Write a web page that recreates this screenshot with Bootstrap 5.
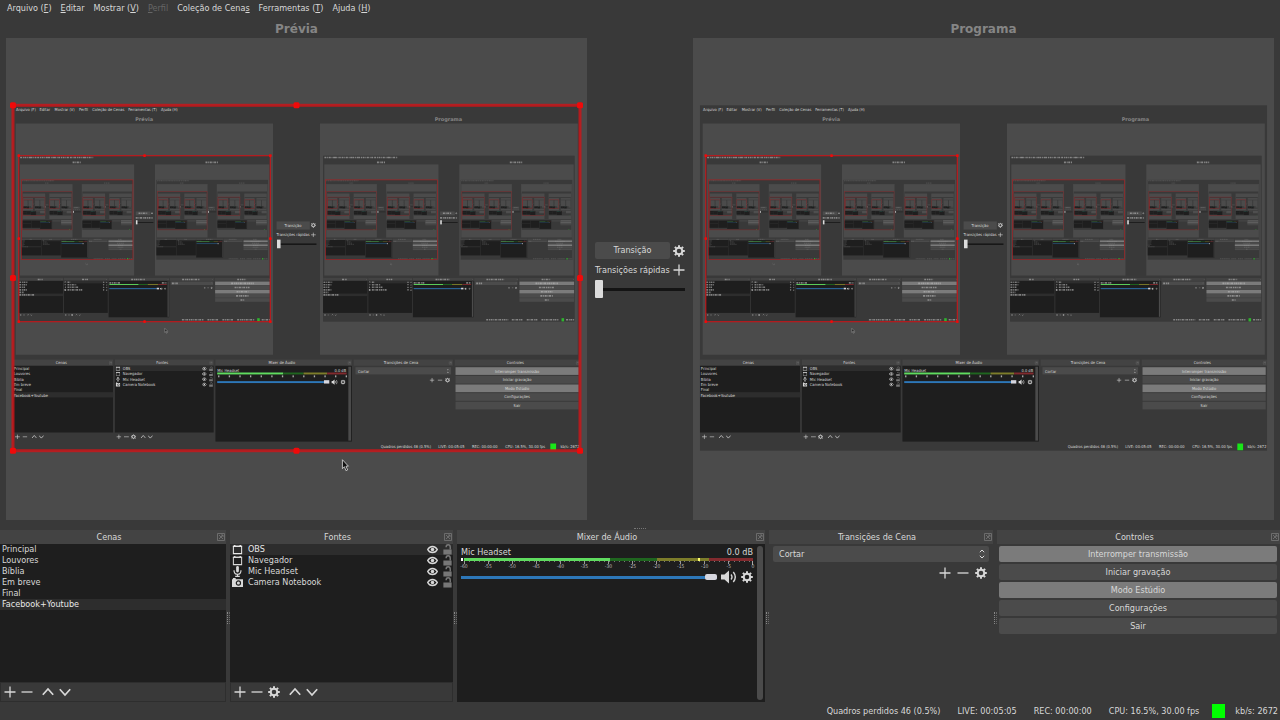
<!DOCTYPE html>
<html lang="pt-BR" data-bs-theme="dark">
<head>
<meta charset="utf-8">
<meta name="viewport" content="width=device-width, initial-scale=1">
<title>OBS Studio</title>
<link href="https://cdn.jsdelivr.net/npm/bootstrap@5.3.0/dist/css/bootstrap.min.css" rel="stylesheet">
<style>
:root{--win:#393939;--pane:#4b4b4b;--well:#1e1e1e;--head:#434343;--ink:#d8d8d8}
body{background:var(--win);color:var(--ink);font-family:"DejaVu Sans Condensed","DejaVu Sans",sans-serif;font-size:9px;line-height:11px}
button,select,input{font:inherit}
.app{min-height:100vh}
.menubar{height:16px;padding-left:7px;gap:9px}
.menubar .nav-link{padding:0;color:var(--ink)}
.menubar .nav-link.disabled{color:#666}
.studio{padding:0 6px}
.monitor{flex:1 1 0;min-width:0}
.monitor h2{font:bold 12px/16px "DejaVu Sans",sans-serif;color:#858585;margin:5px 0 1px;text-align:center}
.canvas-pane{background:var(--pane);flex:1 1 0;min-height:0}
.canvas-pane > svg{display:block;width:100%;height:100%}
.swap{width:106px;padding:4px 8px 0;align-self:center}
.quick{margin:5px 0 4px}
.trans-btn{width:75px}
.grow{flex:1 1 auto}
.ic{display:block;width:12px;height:12px;fill:none;stroke:currentColor;stroke-width:1.3}
.ic.spk{width:16px;height:14px}
.tool{background:none;border:0;padding:0;color:var(--ink);display:block}
.dark-btn{background:var(--pane);border:0;border-radius:2px;color:var(--ink);padding:3px 0;line-height:11px;text-align:center}
.dark-btn:hover{background:#5a5a5a;color:#fff}
.dark-btn.active{background:#7b7b7b}
.tbar{appearance:none;display:block;width:90px;height:18px;margin:0;background:linear-gradient(#141414,#141414) center/100% 3px no-repeat}
.tbar::-webkit-slider-thumb{appearance:none;width:8px;height:18px;background:#dcdcdc;border-radius:1px}
.split{height:10px}
.split i{width:12px;height:2px;border-top:1px dotted #777}
.docks{display:grid;grid-template-columns:226fr 223fr 308fr 224fr 283fr;gap:4px;height:172px}
.dock{min-width:0;position:relative}
.dock header{background:var(--head);height:14px;line-height:14px;text-align:center;padding:0 14px 0 6px;position:relative}
.dock header svg{position:absolute;right:1px;top:3px;width:8px;height:8px;color:#777}
.dock .grip{position:absolute;right:-4px;top:82px;width:3px;height:12px;border-left:1px dotted #888;border-right:1px dotted #666}
.well{background:var(--well)}
.rows{border-radius:0}
.rows .list-group-item{background:transparent;border:0;padding:0 2px;line-height:11px;color:var(--ink);text-align:left}
.rows .list-group-item.active{background:#2d2d2d;color:#e8e8e8;margin:0}
.rows .src{height:11px;padding-right:0}
.src .ic{width:11px;height:11px}
.src .nm{padding-left:5px}
.lock{color:#777}
.toolbar{height:20px;padding:0 3px;gap:5px;background:var(--win);border:1px solid #2e2e2e}
.toolbar .up{margin-left:4px}
.mixer{padding:3px 0 0 4px;margin-right:4px}
.scrollbar{width:6px;border-radius:3px;background:#4b4b4b;margin:2px 2px 2px 0}
.meter{height:3px}
.ticks{height:4px;margin-left:3px;border-right:1px solid #aaa;background:repeating-linear-gradient(90deg,#999 0 1px,transparent 1px 24px) 0 0/100% 3px no-repeat,repeating-linear-gradient(90deg,#777 0 1px,transparent 1px 5px) 0 0/100% 1px no-repeat}
.scale{margin:-1px 0 0 3px;font-size:5px;line-height:5px;color:#bbb}
.scale span{width:0;display:flex;justify-content:center}
.vol-row{height:14px;margin-top:1px;gap:4px}
.fader{appearance:none;height:6px;margin:0;min-width:0;flex:1 1 0;background:linear-gradient(#2d77b8,#2d77b8) center/100% 3px no-repeat}
.fader::-webkit-slider-thumb{appearance:none;width:12px;height:6px;border-radius:2px;background:#d6d6de}
.trans{padding:2px 4px}
.combo{appearance:none;background:var(--pane);border:0;border-radius:2px;color:var(--ink);height:16px;width:100%;padding:0 6px}
.combo-box .ic{position:absolute;right:1px;top:2px;pointer-events:none}
.trans-tools{gap:6px;margin:5px 2px 0}
.ctl{padding:2px 3px 0 2px;gap:2px}
.ctl .dark-btn{height:16px}
.status{height:18px;gap:17px;padding-right:2px;line-height:18px}
.led{width:13px;height:14px;background:#00ff00;margin:0 -7px 0 -4px}
svg text{font-size:4px;fill:#d8d8d8;font-family:"DejaVu Sans Condensed","DejaVu Sans",sans-serif}
svg text.cap{font:bold 5px "DejaVu Sans",sans-serif;fill:#858585}
</style>
</head>
<body>
<svg class="d-none" aria-hidden="true">
  <symbol id="i-plus" viewBox="0 0 12 12"><path d="M6 .5v11M.5 6h11"/></symbol>
  <symbol id="i-minus" viewBox="0 0 12 12"><path d="M.5 6h11"/></symbol>
  <symbol id="i-up" viewBox="0 0 12 12"><path d="M.8 8.800 6 3l5.200 5.800" stroke-width="1.700"/></symbol>
  <symbol id="i-down" viewBox="0 0 12 12"><path d="M.8 3.200 6 9l5.200-5.800" stroke-width="1.700"/></symbol>
  <symbol id="i-gear" viewBox="0 0 12 12"><circle cx="6" cy="6" r="3.300" stroke-width="2"/><path d="M6 .2v2M6 9.800v2M.2 6h2M9.800 6h2M1.900 1.900l1.400 1.400M8.700 8.700l1.400 1.400M1.900 10.100l1.400-1.400M8.700 3.300l1.400-1.400" stroke-width="2"/></symbol>
  <symbol id="i-win" viewBox="0 0 12 12"><path d="M1.500 2.500h9v8h-9z" stroke-width="1.100"/><path d="M1 2.600h10M3 1v2M9 1v2" stroke-width="1.600"/></symbol>
  <symbol id="i-mic" viewBox="0 0 12 12"><rect x="4.500" y="0" width="3" height="7" rx="1.500" fill="currentColor" stroke="none"/><path d="M2.200 4.500c0 6 7.600 6 7.600 0M6 9v2M3.500 11.300h5"/></symbol>
  <symbol id="i-cam" viewBox="0 0 12 12"><path d="M0 2.500h1V1h3v1.500h8V11H0z" fill="currentColor" stroke="none"/><circle cx="7" cy="6.600" r="2.300" stroke="#1e1e1e"/></symbol>
  <symbol id="i-eye" viewBox="0 0 12 12"><path d="M.8 6C3 1.500 9 1.500 11.200 6 9 10.500 3 10.500.8 6z" stroke-width="1.600"/><circle cx="6" cy="6" r="1.900" fill="currentColor" stroke="none"/></symbol>
  <symbol id="i-lock" viewBox="0 0 12 12"><path d="M1.500 6h9v5.500h-9z" fill="currentColor" stroke="none"/><path d="M4.500 3.500c0-3.500 4.500-3.500 4.500 0V6" stroke-width="1.600"/></symbol>
  <symbol id="i-spk" viewBox="0 0 16 14"><path d="M0 4.500h3.500L8 .5v13l-4.500-4H0z" fill="currentColor" stroke="none"/><path d="M10 4.500q2 2.500 0 5M12.300 2q4 5 0 10" stroke-width="1.400"/></symbol>
  <symbol id="i-pop" viewBox="0 0 8 8"><path d="M.5 .5h7v7h-7zM2 2l4 4M6 2 2 6M4 2h2v2" stroke-width=".8"/></symbol>
  <symbol id="i-sort" viewBox="0 0 12 12"><path d="M3.800 4.200 6 2l2.200 2.200M3.800 7.800 6 10l2.200-2.200" stroke-width="1"/></symbol>
</svg>

<div class="app d-flex flex-column">
  <nav class="nav menubar align-items-center" aria-label="Menu">
    <a class="nav-link" href="#">Arquivo (<u>F</u>)</a>
    <a class="nav-link" href="#"><u>E</u>ditar</a>
    <a class="nav-link" href="#">Mostrar (<u>V</u>)</a>
    <a class="nav-link disabled" href="#" aria-disabled="true"><u>P</u>erfil</a>
    <a class="nav-link" href="#">Coleção de Cena<u>s</u></a>
    <a class="nav-link" href="#">Ferramentas (<u>T</u>)</a>
    <a class="nav-link" href="#">Ajuda (<u>H</u>)</a>
  </nav>

  <main class="studio d-flex grow">
    <section class="monitor d-flex flex-column"><h2>Prévia</h2><div class="canvas-pane"><svg id="preview" viewBox="0 0 582 482" role="img" aria-label="Prévia"></svg></div></section>
    <section class="swap">
      <div class="d-flex align-items-center justify-content-between"><button class="dark-btn trans-btn" type="button">Transição</button><button class="tool" type="button" aria-label="Configurar transição"><svg class="ic"><use href="#i-gear"/></svg></button></div>
      <div class="quick d-flex align-items-center justify-content-between"><label for="tbar" class="text-nowrap">Transições rápidas</label><button class="tool" type="button" aria-label="Adicionar transição rápida"><svg class="ic"><use href="#i-plus"/></svg></button></div>
      <input class="tbar" id="tbar" type="range" min="0" max="100" value="0">
    </section>
    <section class="monitor d-flex flex-column"><h2>Programa</h2><div class="canvas-pane"><svg id="program" viewBox="0 0 582 482" role="img" aria-label="Programa"></svg></div></section>
  </main>

  <div class="split d-flex justify-content-center align-items-end"><i></i></div>

  <div class="docks">
    <section class="dock d-flex flex-column">
      <header>Cenas<svg class="ic"><use href="#i-pop"/></svg></header>
      <div class="well grow list-group rows">
        <button type="button" class="list-group-item">Principal</button>
        <button type="button" class="list-group-item">Louvores</button>
        <button type="button" class="list-group-item">Bíblia</button>
        <button type="button" class="list-group-item">Em breve</button>
        <button type="button" class="list-group-item">Final</button>
        <button type="button" class="list-group-item active">Facebook+Youtube</button>
      </div>
      <div class="toolbar d-flex align-items-center">
        <button class="tool" type="button" aria-label="Adicionar cena"><svg class="ic"><use href="#i-plus"/></svg></button>
        <button class="tool" type="button" aria-label="Remover cena"><svg class="ic"><use href="#i-minus"/></svg></button>
        <button class="tool up" type="button" aria-label="Mover cena para cima"><svg class="ic"><use href="#i-up"/></svg></button>
        <button class="tool" type="button" aria-label="Mover cena para baixo"><svg class="ic"><use href="#i-down"/></svg></button>
      </div>
      <span class="grip"></span>
    </section>

    <section class="dock d-flex flex-column">
      <header>Fontes<svg class="ic"><use href="#i-pop"/></svg></header>
      <ul class="well grow list-group rows mb-0" id="sources"></ul>
      <div class="toolbar d-flex align-items-center">
        <button class="tool" type="button" aria-label="Adicionar fonte"><svg class="ic"><use href="#i-plus"/></svg></button>
        <button class="tool" type="button" aria-label="Remover fonte"><svg class="ic"><use href="#i-minus"/></svg></button>
        <button class="tool" type="button" aria-label="Propriedades da fonte"><svg class="ic"><use href="#i-gear"/></svg></button>
        <button class="tool up" type="button" aria-label="Mover fonte para cima"><svg class="ic"><use href="#i-up"/></svg></button>
        <button class="tool" type="button" aria-label="Mover fonte para baixo"><svg class="ic"><use href="#i-down"/></svg></button>
      </div>
      <span class="grip"></span>
    </section>

    <section class="dock d-flex flex-column">
      <header>Mixer de Áudio<svg class="ic"><use href="#i-pop"/></svg></header>
      <div class="well grow d-flex">
        <div class="mixer grow">
          <div class="d-flex justify-content-between"><label for="vol">Mic Headset</label><span>0.0 dB</span></div>
          <div class="meter d-flex">
            <b style="width:1%;background:linear-gradient(90deg,#fff 2px,#1e1e1e 2px)"></b><b style="width:50%;background:#5fdc5f"></b><b style="width:16%;background:#1f661f"></b><b style="width:14%;background:#7d7d2a"></b><b style="width:1%;background:#ffff70"></b><b style="width:3%;background:#7d7d2a"></b><b style="width:15%;background:#822a2e"></b>
          </div>
          <div class="ticks"></div>
          <div class="scale d-flex justify-content-between" id="scale"></div>
          <div class="vol-row d-flex align-items-center">
            <input class="fader" id="vol" type="range" min="0" max="100" value="100">
            <button class="tool" type="button" aria-label="Silenciar"><svg class="ic spk"><use href="#i-spk"/></svg></button>
            <button class="tool" type="button" aria-label="Configurar áudio"><svg class="ic"><use href="#i-gear"/></svg></button>
          </div>
        </div>
        <div class="scrollbar"></div>
      </div>
      <span class="grip"></span>
    </section>

    <section class="dock d-flex flex-column">
      <header>Transições de Cena<svg class="ic"><use href="#i-pop"/></svg></header>
      <div class="trans">
        <div class="combo-box position-relative"><select class="combo" aria-label="Transição de cena"><option>Cortar</option><option>Esmaecer</option></select><svg class="ic"><use href="#i-sort"/></svg></div>
        <div class="trans-tools d-flex justify-content-end">
          <button class="tool" type="button" aria-label="Adicionar transição"><svg class="ic"><use href="#i-plus"/></svg></button>
          <button class="tool" type="button" aria-label="Remover transição"><svg class="ic"><use href="#i-minus"/></svg></button>
          <button class="tool" type="button" aria-label="Propriedades da transição"><svg class="ic"><use href="#i-gear"/></svg></button>
        </div>
      </div>
      <span class="grip"></span>
    </section>

    <section class="dock d-flex flex-column">
      <header>Controles<svg class="ic"><use href="#i-pop"/></svg></header>
      <div class="ctl d-flex flex-column">
        <button type="button" class="dark-btn active">Interromper transmissão</button>
        <button type="button" class="dark-btn">Iniciar gravação</button>
        <button type="button" class="dark-btn active">Modo Estúdio</button>
        <button type="button" class="dark-btn">Configurações</button>
        <button type="button" class="dark-btn">Sair</button>
      </div>
    </section>
  </div>

  <footer class="status d-flex justify-content-end align-items-center">
    <span>Quadros perdidos 46 (0.5%)</span><span>LIVE: 00:05:05</span><span>REC: 00:00:00</span><span>CPU: 16.5%, 30.00 fps</span><span class="led"></span><span>kb/s: 2672</span>
  </footer>
</div>

<script src="https://cdn.jsdelivr.net/npm/bootstrap@5.3.0/dist/js/bootstrap.bundle.min.js"></script>
<script>
const ico = n => `<svg class="ic"><use href="#i-${n}"/></svg>`;
document.getElementById('sources').innerHTML =
  [['win','OBS'],['win','Navegador'],['mic','Mic Headset'],['cam','Camera Notebook']].map(([i,n],k) =>
  `<li class="list-group-item src d-flex align-items-center${k ? '' : ' active'}">${ico(i)}<span class="nm grow">${n}</span><button class="tool" type="button" aria-label="Visibilidade de ${n}">${ico('eye')}</button><button class="tool lock ms-1" type="button" aria-label="Bloquear ${n}">${ico('lock')}</button></li>`).join('');
for (let v = -60; v <= 0; v += 5) document.getElementById('scale').insertAdjacentHTML('beforeend', `<span>${v}</span>`);

// The captured desktop shows this same window, so each monitor repeats it at a smaller size.
const MENU = [[7,'Arquivo (F)'],[60,'Editar'],[94,'Mostrar (V)'],[149,'Perfil'],[179,'Coleção de Cenas'],[260,'Ferramentas (T)'],[334,'Ajuda (H)']];
function capture(x, y, w, h, depth, outlined) {
  const sx = w / 1280, sy = h / 720, X = v => x + v * sx, Y = v => y + v * sy;
  let o = '';
  const box = (a, b, c, d, f) => o += `<rect x="${X(a)}" y="${Y(b)}" width="${(c-a)*sx}" height="${(d-b)*sy}" fill="${f}"/>`;
  const label = (a, b, s, anchor = 'start', len = s.length * 5, cls = '') => {
    if (depth === 1) o += `<text x="${X(a)}" y="${Y(b) + (cls ? 2 : 1.5)}" text-anchor="${anchor}" class="${cls}">${s}</text>`;
    else if (depth < 4) {
      const l = anchor === 'middle' ? a - len/2 : anchor === 'end' ? a - len : a;
      o += `<path d="M${X(l)} ${Y(b)}h${len*sx}" stroke="#bbb" stroke-opacity="${depth === 2 ? .6 : .3}" stroke-width="${7*sy}" stroke-dasharray="${10*sx} ${4*sx} ${5*sx} ${3*sx}"/>`;
    }
  };
  const icon = (n, cx, cy, s = 12, c = '#d8d8d8') => {
    if (depth < 3) o += `<svg x="${X(cx - s/2)}" y="${Y(cy) - s*sx/2}" width="${s*sx}" height="${s*sx}" color="${c}" fill="none" stroke="${c}" stroke-width="1.3"><use href="#i-${n}" width="100%" height="100%"/></svg>`;
  };
  box(0, 0, 1280, 720, '#393939');
  MENU.forEach(([a, s]) => label(a, 8, s));
  label(296, 29, 'Prévia', 'middle', 44, 'cap'); label(983, 29, 'Programa', 'middle', 66, 'cap');
  box(6, 38, 587, 520, '#4b4b4b'); box(693, 38, 1275, 520, '#4b4b4b');
  if (depth < 6) {
    o += capture(X(13), Y(105), 568*sx, 346*sy, depth + 1, true);
    o += capture(X(700), Y(105), 568*sx, 346*sy, depth + 1, false);
  }
  box(595, 242, 670, 259, '#4b4b4b'); label(632, 250, 'Transição', 'middle'); icon('gear', 678, 250);
  label(595, 270, 'Transições rápidas', 'start', 75); icon('plus', 678, 270);
  box(600, 288, 685, 291, '#141414'); box(596, 280, 604, 298, '#dcdcdc');
  [[0,226],[230,453],[457,765],[769,993],[997,1280]].forEach(([a,b]) => { box(a, 530, b, 543, '#434343'); icon('pop', b-6, 537, 8, '#777'); });
  [[109,'Cenas'],[337,'Fontes'],[607,'Mixer de Áudio'],[876,'Transições de Cena'],[1134,'Controles']].forEach(([a,s]) => label(a, 537, s, 'middle'));
  box(0, 543, 226, 682, '#1e1e1e'); box(230, 543, 453, 682, '#1e1e1e'); box(457, 543, 765, 701, '#1e1e1e');
  box(0, 598, 226, 609, '#2d2d2d'); box(230, 543, 453, 554, '#2d2d2d'); box(757, 545, 763, 699, '#4b4b4b');
  ['Principal','Louvores','Bíblia','Em breve','Final','Facebook+Youtube'].forEach((s,i) => label(2, 549 + i*11, s));
  ['OBS','Navegador','Mic Headset','Camera Notebook'].forEach((s,i) => { const r = 549 + i*11;
    icon(['win','win','mic','cam'][i], 237, r, 11); label(248, r, s); icon('eye', 432, r, 11); icon('lock', 447, r, 11, '#777'); });
  [['plus',10],['minus',27],['up',48],['down',64],['plus',239],['minus',256],['gear',272],['up',294],['down',310]].forEach(([n,a]) => icon(n, a, 691));
  label(461, 552, 'Mic Headset'); label(752, 552, '0.0 dB', 'end', 24);
  box(461, 557, 610, 561, '#5fdc5f'); box(610, 557, 656, 561, '#1f661f'); box(656, 557, 709, 561, '#7d7d2a'); box(709, 557, 753, 561, '#822a2e');
  if (depth === 1) for (let i = 0; i < 13; i++) box(463 + i*24, 563, 466 + i*24, 567, '#aaa');
  box(461, 575, 702, 579, '#2d77b8'); box(702, 573, 714, 580, '#d6d6de'); icon('spk', 726, 577, 15); icon('gear', 745, 577);
  box(773, 546, 989, 561, '#4b4b4b'); label(779, 554, 'Cortar'); icon('sort', 982, 554); icon('plus', 946, 573); icon('minus', 964, 573); icon('gear', 981, 573);
  ['Interromper transmissão','Iniciar gravação','Modo Estúdio','Configurações','Sair'].forEach((s,i) => { box(999, 546 + i*18, 1277, 562 + i*18, i === 0 || i === 2 ? '#7b7b7b' : '#4b4b4b'); label(1138, 554 + i*18, s, 'middle'); });
  [[830,'Quadros perdidos 46 (0.5%)',112],[960,'LIVE: 00:05:05',58],[1036,'REC: 00:00:00',57],[1111,'CPU: 16.5%, 30.00 fps',89],[1236,'kb/s: 2672',42]].forEach(([a,s,l]) => label(a, 712, s, 'start', l));
  box(1213, 705, 1226, 719, depth === 1 ? '#19e619' : '#2fb52f');
  if (depth < 3) o += pointer(X(343), Y(465), sx);
  if (outlined) o += `<rect x="${x}" y="${y}" width="${w}" height="${h}" fill="none" stroke="#c8161a" stroke-width="${depth === 1 ? 3 : depth === 2 ? 1.3 : .6}" stroke-opacity="${depth > 3 ? .4 : .85}"/>`;
  if (outlined && depth < 3) for (const i of [0, .5, 1]) for (const j of [0, .5, 1]) if (i !== .5 || j !== .5) { const s = depth === 1 ? 6 : 2.6;
    o += `<rect x="${x + w*i - s/2}" y="${y + h*j - s/2}" width="${s}" height="${s}" rx="${s/4}" fill="#f00a0a"/>`; }
  return o;
}
function pointer(x, y, s) { return `<path transform="translate(${x} ${y}) scale(${s})" d="M0 0v9l2-2 1.500 4 1.700-.7L3.600 6.500H6z" fill="#111" stroke="#ddd" stroke-width=".8"/>`; }
document.getElementById('preview').innerHTML = capture(7, 67, 568, 346, 1, true) + pointer(337, 422, 1);
document.getElementById('program').innerHTML = capture(7, 67, 568, 346, 1, false);
</script>
</body>
</html>
